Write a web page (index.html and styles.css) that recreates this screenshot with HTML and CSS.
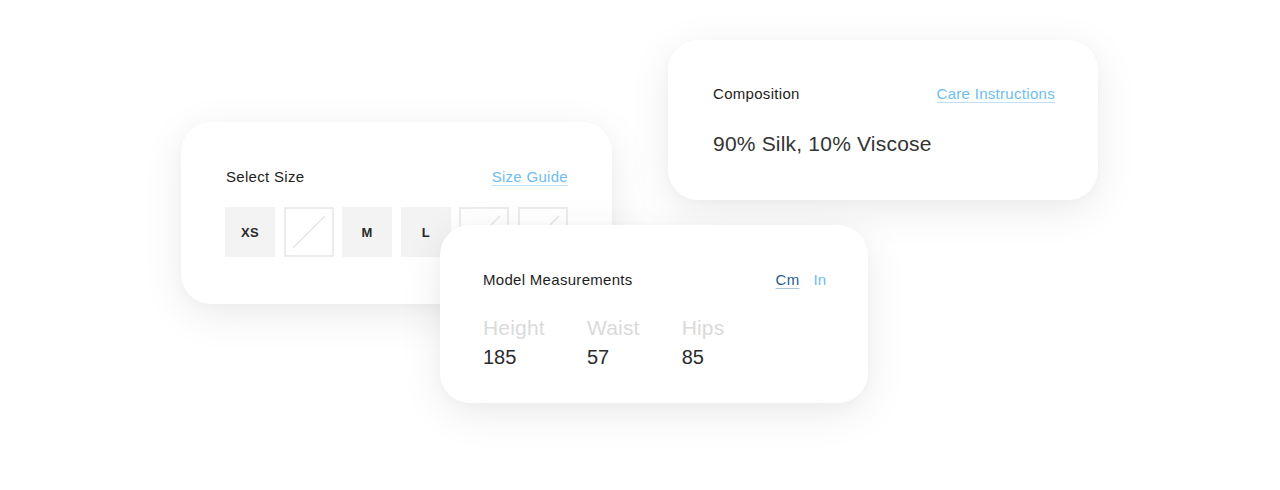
FILE: index.html
```html
<!DOCTYPE html>
<html lang="en">
<head>
<meta charset="utf-8">
<title>Product details</title>
<link rel="stylesheet" href="styles.css">
</head>
<body>
<div class="stage">
  <section class="card card-size">
    <div class="card-head">
      <span class="title">Select Size</span>
      <a class="link" href="#">Size Guide</a>
    </div>
    <div class="sizes">
      <button class="size">XS</button>
      <button class="size size-off"><svg viewBox="0 0 46 46"><line x1="7" y1="39" x2="39" y2="7"/></svg></button>
      <button class="size">M</button>
      <button class="size">L</button>
      <button class="size size-off"><svg viewBox="0 0 46 46"><line x1="7" y1="39" x2="39" y2="7"/></svg></button>
      <button class="size size-off"><svg viewBox="0 0 46 46"><line x1="7" y1="39" x2="39" y2="7"/></svg></button>
    </div>
  </section>

  <section class="card card-comp">
    <div class="card-head">
      <span class="title">Composition</span>
      <a class="link" href="#">Care Instructions</a>
    </div>
    <p class="comp-text">90% Silk, 10% Viscose</p>
  </section>

  <section class="card card-meas">
    <div class="card-head">
      <span class="title">Model Measurements</span>
      <div class="units">
        <a class="link unit-active" href="#">Cm</a>
        <a class="unit" href="#">In</a>
      </div>
    </div>
    <div class="meas">
      <div class="meas-col"><span class="meas-label">Height</span><span class="meas-val">185</span></div>
      <div class="meas-col"><span class="meas-label">Waist</span><span class="meas-val">57</span></div>
      <div class="meas-col"><span class="meas-label">Hips</span><span class="meas-val">85</span></div>
    </div>
  </section>
</div>
</body>
</html>
```

FILE: styles.css
```css
* { box-sizing: border-box; }
html, body { margin: 0; padding: 0; background: #fff; }
body {
  font-family: "Liberation Sans", Arial, sans-serif;
  color: #222;
  width: 1280px;
  height: 490px;
  overflow: hidden;
}
.stage {
  position: relative;
  width: 1280px;
  height: 490px;
}
.card {
  position: absolute;
  background: #fff;
  border-radius: 30px;
  box-shadow: 0 10px 42px rgba(0, 0, 0, 0.085), 0 2px 8px rgba(0, 0, 0, 0.02);
  display: flex;
  flex-direction: column;
}
.card-size { left: 181px; top: 122px; width: 431px; height: 182px; padding: 46px 44px 0 44px; z-index: 1; }
.card-comp { left: 668px; top: 40px; width: 430px; height: 160px; padding: 45px 43px 0 45px; z-index: 1; }
.card-meas { left: 440px; top: 225px; width: 428px; height: 178px; padding: 46px 42px 0 43px; z-index: 2; }

.card-head {
  display: flex;
  justify-content: space-between;
  align-items: center;
  height: 18px;
  line-height: 18px;
}
.title { font-size: 15px; letter-spacing: 0.3px; color: #1e1e1e; }
.card-size .title { padding-left: 1px; }
.link {
  font-size: 15px;
  letter-spacing: 0.3px;
  color: #6dbdf2;
  text-decoration: underline;
  text-decoration-color: #bfe0f7;
  text-underline-offset: 3px;
  text-decoration-thickness: 1px;
}
.sizes {
  display: flex;
  gap: 8.6px;
  margin-top: 21px;
}
.size {
  width: 50px;
  height: 50px;
  border: 0;
  padding: 0;
  background: #f3f3f3;
  font-family: "Liberation Sans", Arial, sans-serif;
  font-weight: bold;
  font-size: 13px;
  letter-spacing: 0.3px;
  color: #2a2a2a;
  display: flex;
  align-items: center;
  justify-content: center;
}
.size-off {
  background: #fff;
  border: 2px solid #ececec;
}
.size-off svg { width: 46px; height: 46px; display: block; }
.size-off line { stroke: #e6e6e6; stroke-width: 1.5; }

.comp-text {
  margin: 29px 0 0;
  font-size: 21px;
  letter-spacing: 0.2px;
  line-height: 24px;
  color: #333;
}

.units { display: flex; gap: 14px; align-items: center; }
.unit-active { color: #1f5e91; text-decoration-color: #a9c7de; }
.unit { font-size: 15px; color: #6dbdf2; text-decoration: none; }

.meas {
  display: flex;
  gap: 42px;
  margin-top: 25px;
}
.meas-col { display: flex; flex-direction: column; }
.meas-label { font-size: 21px; letter-spacing: 0.2px; line-height: 28px; color: #dadada; }
.meas-val { font-size: 20px; line-height: 30px; color: #2b2b2b; }
```
